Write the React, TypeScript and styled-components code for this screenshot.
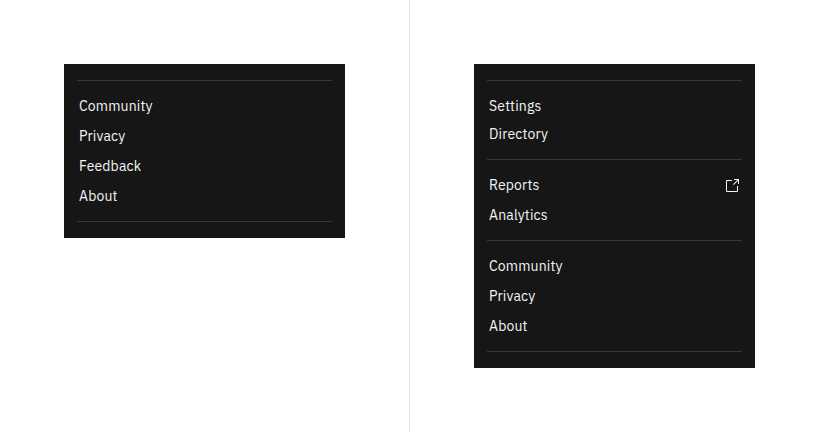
import React from "react";
import styled, { createGlobalStyle } from "styled-components";

const GlobalStyle = createGlobalStyle`
  * { box-sizing: border-box; }
  body { margin: 0; background: #fff; }
`;

const Page = styled.main`
  display: grid;
  grid-template-columns: 410px 409px;
  height: 432px;
  overflow: hidden;
  font-family: "IBM Plex Sans", Roboto, "Liberation Sans", sans-serif;
`;

const Example = styled.section`
  display: flex;
  align-items: flex-start;
  padding: 64px;
  &:first-child { border-right: 1px solid #e0e0e0; }
`;

const Panel = styled.nav`
  width: 281px;
  flex: none;
  padding: 16px 13px;
  background: #161616;
`;

const Divider = styled.hr`
  height: 1px;
  margin: 0;
  border: 0;
  background: #393939;
`;

const Group = styled.ul<{ $compact?: boolean }>`
  list-style: none;
  margin: 0;
  padding: ${(p) => (p.$compact ? 11 : 10)}px 2px;
  --row: ${(p) => (p.$compact ? 28 : 30)}px;
`;

const Item = styled.li`
  display: flex;
  align-items: center;
  justify-content: space-between;
  height: var(--row);
  color: #f4f4f4;
  font-size: 14px;
`;

const Label = styled.span`
  letter-spacing: 0.16px;
`;

const LaunchIcon = styled.svg`
  width: 16px;
  height: 16px;
  margin-top: 2px;
  fill: #f4f4f4;
`;

interface Section {
  items: string[];
  compact?: boolean;
}

const sideNav: Section[] = [{ items: ["Community", "Privacy", "Feedback", "About"] }];
const fullNav: Section[] = [
  { items: ["Settings", "Directory"], compact: true },
  { items: ["Reports", "Analytics"] },
  { items: ["Community", "Privacy", "About"] },
];

function Menu({ sections }: { sections: Section[] }) {
  return (
    <Panel>
      <Divider />
      {sections.map((section) => (
        <React.Fragment key={section.items[0]}>
          <Group $compact={section.compact}>
            {section.items.map((name) => (
              <Item key={name}>
                <Label>{name}</Label>
                {name === "Reports" && (
                  <LaunchIcon viewBox="0 0 32 32" aria-hidden="true">
                    <path d="M26 28H6a2 2 0 0 1-2-2V6a2 2 0 0 1 2-2h10v2H6v20h20V16h2v10a2 2 0 0 1-2 2z" />
                    <path d="M20 2v2h6.586L18 12.586 19.414 14 28 5.414V12h2V2z" />
                  </LaunchIcon>
                )}
              </Item>
            ))}
          </Group>
          <Divider />
        </React.Fragment>
      ))}
    </Panel>
  );
}

export default function App() {
  return (
    <>
      <GlobalStyle />
      <Page>
        <Example>
          <Menu sections={sideNav} />
        </Example>
        <Example>
          <Menu sections={fullNav} />
        </Example>
      </Page>
    </>
  );
}
